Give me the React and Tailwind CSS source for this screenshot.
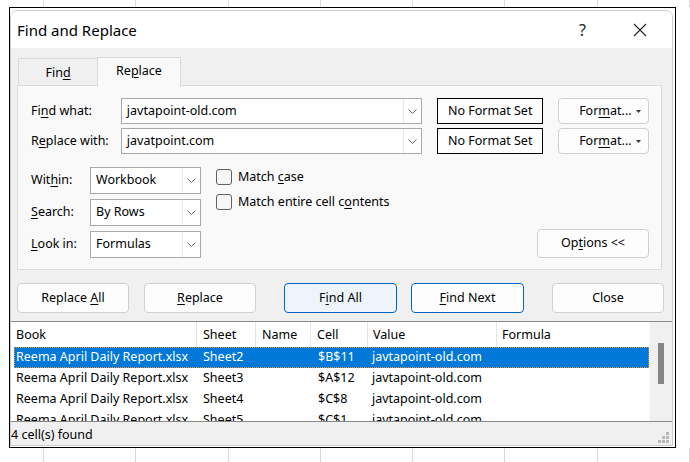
import React from "react";

const U = ({ children }) => (
  <span className="underline underline-offset-[2px] decoration-[1px]">{children}</span>
);

const Chevron = () => (
  <svg width="9" height="5" viewBox="0 0 9 5">
    <path d="M0.5 0.5 L4.5 4.5 L8.5 0.5" fill="none" stroke="#6a6a6a" strokeWidth="1" />
  </svg>
);

const Combo = ({ w, h, children }) => (
  <div className={`${w} ${h} flex border border-[#a9a9a9] bg-white`}>
    <div className="flex-1 flex items-center pl-[5px] text-black">{children}</div>
    <div className="w-[18px] flex items-center justify-center border-l border-[#e6e6e6]">
      <Chevron />
    </div>
  </div>
);

const GridStrip = ({ h }) => (
  <div className={`${h} flex`}>
    <div className="w-[46px] border-r border-[#d9d9d9]" />
    {[0, 1, 2, 3, 4, 5, 6].map((i) => (
      <div key={i} className="w-[96px] border-r border-[#d9d9d9]" />
    ))}
  </div>
);

const Btn = ({ w, children, variant }) => {
  const cls =
    variant === "primary"
      ? "border-[#0067c0] bg-[#eef4fb]"
      : variant === "blue"
      ? "border-[#0067c0] bg-[#fdfdfd]"
      : "border-[#d0d0d0] bg-[#fdfdfd]";
  return (
    <div className={`${w} h-[30px] rounded-[4px] border ${cls} flex items-center justify-center text-black`}>
      <span>{children}</span>
    </div>
  );
};

const rows = [
  ["Reema April Daily Report.xlsx", "Sheet2", "$B$11", "javtapoint-old.com"],
  ["Reema April Daily Report.xlsx", "Sheet3", "$A$12", "javtapoint-old.com"],
  ["Reema April Daily Report.xlsx", "Sheet4", "$C$8", "javtapoint-old.com"],
  ["Reema April Daily Report.xlsx", "Sheet5", "$C$1", "javtapoint-old.com"],
];

const FormatBtn = () => (
  <div className="ml-[15px] w-[91px] h-[26px] rounded-[4px] border border-[#d0d0d0] bg-[#fdfdfd] flex items-center pl-[20px]">
    <span>
      For<U>m</U>at...
    </span>
    <svg width="5" height="3" viewBox="0 0 5 3" className="ml-auto mr-[7px]">
      <path d="M0 0 L5 0 L2.5 3 Z" fill="#333" />
    </svg>
  </div>
);

export default function App() {
  return (
    <div className="w-[690px] h-[462px] bg-white overflow-hidden font-['Noto_Sans',sans-serif] text-[12.5px] text-black leading-none">
      <GridStrip h="h-[7px]" />
      <div className="ml-[9px] w-[667px] h-[441px] border border-black bg-white pt-[2px] pr-[2px] pb-[1px] flex flex-col">
        <div className="flex-1 flex flex-col rounded-t-[7px] border border-[#cccccc] overflow-hidden">
          {/* Title bar */}
          <div className="h-[37px] bg-white flex items-center shrink-0">
            <div className="pl-[6px] text-[15px] pt-[1px]">Find and Replace</div>
            <div className="ml-auto flex items-center">
              <div className="text-[16px] mr-[47px] pt-[1px] text-[#222]">?</div>
              <svg width="14" height="14" viewBox="0 0 14 14" className="mr-[25px]">
                <path d="M1 1 L13 13 M13 1 L1 13" stroke="#222" strokeWidth="1.1" />
              </svg>
            </div>
          </div>

          {/* Body */}
          <div className="flex-1 bg-[#f0f0f0] flex flex-col">
            {/* Tabs */}
            <div className="mt-[9px] ml-[7px] flex items-end h-[28px]">
              <div className="w-[79px] h-[27px] border-t border-l border-[#dadada] bg-[#f0f0f0] flex items-center justify-center pt-[2px]">
                <span>
                  Fin<U>d</U>
                </span>
              </div>
              <div className="w-[84px] h-[29px] border border-b-0 border-[#dadada] bg-[#f9f9f9] flex items-center justify-center -mb-px relative z-10 pb-[2px]">
                <span>
                  Re<U>p</U>lace
                </span>
              </div>
            </div>

            {/* Panel */}
            <div className="ml-[6px] w-[645px] h-[185px] border border-[#dcdcdc] bg-[#f9f9f9] pl-[13px] pt-[12px] pr-[12px] flex flex-col">
              <div className="flex items-center h-[26px]">
                <div className="w-[90px]">
                  Fi<U>n</U>d what:
                </div>
                <Combo w="w-[302px]" h="h-[26px]">javtapoint-old.com</Combo>
                <div className="ml-[15px] w-[106px] h-[26px] border border-black bg-white flex items-center justify-center">
                  No Format Set
                </div>
                <FormatBtn />
              </div>
              <div className="flex items-center h-[26px] mt-[4px]">
                <div className="w-[90px]">
                  R<U>e</U>place with:
                </div>
                <Combo w="w-[302px]" h="h-[26px]">javatpoint.com</Combo>
                <div className="ml-[15px] w-[106px] h-[26px] border border-black bg-white flex items-center justify-center">
                  No Format Set
                </div>
                <FormatBtn />
              </div>

              <div className="flex mt-[13px]">
                <div className="flex flex-col gap-[5px]">
                  <div className="flex items-center h-[27px]">
                    <div className="w-[59px]">
                      Wit<U>h</U>in:
                    </div>
                    <Combo w="w-[111px]" h="h-[27px]">Workbook</Combo>
                  </div>
                  <div className="flex items-center h-[27px]">
                    <div className="w-[59px]">
                      <U>S</U>earch:
                    </div>
                    <Combo w="w-[111px]" h="h-[27px]">By Rows</Combo>
                  </div>
                  <div className="flex items-center h-[27px]">
                    <div className="w-[59px]">
                      <U>L</U>ook in:
                    </div>
                    <Combo w="w-[111px]" h="h-[27px]">Formulas</Combo>
                  </div>
                </div>
                <div className="ml-[15px] pt-[2px] flex flex-col gap-[9px]">
                  <div className="flex items-center h-[16px]">
                    <div className="w-[16px] h-[16px] rounded-[3px] border border-[#606060] bg-[#f7f7f7]" />
                    <div className="ml-[6px] pt-[1px]">
                      Match <U>c</U>ase
                    </div>
                  </div>
                  <div className="flex items-center h-[16px]">
                    <div className="w-[16px] h-[16px] rounded-[3px] border border-[#606060] bg-[#f7f7f7]" />
                    <div className="ml-[6px] pt-[1px]">
                      Match entire cell c<U>o</U>ntents
                    </div>
                  </div>
                </div>
                <div className="ml-auto self-end w-[112px] h-[29px] rounded-[4px] border border-[#d0d0d0] bg-[#fdfdfd] flex items-center justify-center">
                  <span>
                    Op<U>t</U>ions &lt;&lt;
                  </span>
                </div>
              </div>
            </div>

            {/* Buttons */}
            <div className="mt-[13px] ml-[6px] flex">
              <Btn w="w-[112px]">
                Replace <U>A</U>ll
              </Btn>
              <div className="ml-[15px]">
                <Btn w="w-[112px]">
                  <U>R</U>eplace
                </Btn>
              </div>
              <div className="ml-[28px]">
                <Btn w="w-[113px]" variant="primary">
                  F<U>i</U>nd All
                </Btn>
              </div>
              <div className="ml-[14px]">
                <Btn w="w-[113px]" variant="blue">
                  <U>F</U>ind Next
                </Btn>
              </div>
              <div className="ml-[28px]">
                <Btn w="w-[112px]">Close</Btn>
              </div>
            </div>

            {/* Results list */}
            <div className="mt-[8px] -ml-px -mr-px h-[101px] border border-[#8a8a8a] bg-white flex">
              <div className="flex-1 overflow-hidden flex flex-col">
                <div className="h-[25px] flex shrink-0">
                  <div className="w-[186px] border-r border-[#e5e5e5] flex items-center pl-[5px] pt-[1px]">Book</div>
                  <div className="w-[59px] border-r border-[#e5e5e5] flex items-center pl-[6px] pt-[1px]">Sheet</div>
                  <div className="w-[55px] border-r border-[#e5e5e5] flex items-center pl-[6px] pt-[1px]">Name</div>
                  <div className="w-[57px] border-r border-[#e5e5e5] flex items-center pl-[6px] pt-[1px]">Cell</div>
                  <div className="w-[129px] border-r border-[#e5e5e5] flex items-center pl-[5px] pt-[1px]">Value</div>
                  <div className="flex-1 flex items-center pl-[5px] pt-[1px]">Formula</div>
                </div>
                <div className="pl-[3px] flex flex-col">
                  {rows.map((r, i) => (
                    <div
                      key={i}
                      className={`h-[21px] shrink-0 flex items-center ${
                        i === 0
                          ? "bg-[#0078d7] text-white border border-dotted border-[#e89040]"
                          : "border border-transparent"
                      }`}
                    >
                      <div className="w-[182px] pl-[1px] whitespace-nowrap">{r[0]}</div>
                      <div className="w-[59px] pl-[6px]">{r[1]}</div>
                      <div className="w-[55px]" />
                      <div className="w-[57px] pl-[7px]">{r[2]}</div>
                      <div className="w-[129px] pl-[4px] whitespace-nowrap">{r[3]}</div>
                      <div className="flex-1" />
                    </div>
                  ))}
                </div>
              </div>
              <div className="w-[23px] bg-[#f0f0f0] border-l border-[#f8f8f8]">
                <div className="ml-[8px] mt-[21px] w-[6px] h-[41px] bg-[#858585]" />
              </div>
            </div>

            {/* Status bar */}
            <div className="flex-1 flex items-center relative">
              <div className="pt-[3px]">4 cell(s) found</div>
              <svg width="12" height="12" viewBox="0 0 12 12" className="absolute right-[2px] bottom-[1px]">
                <rect x="8" y="0" width="3" height="3" fill="#b8b8b8" />
                <rect x="4" y="4" width="3" height="3" fill="#b8b8b8" />
                <rect x="8" y="4" width="3" height="3" fill="#b8b8b8" />
                <rect x="0" y="8" width="3" height="3" fill="#b8b8b8" />
                <rect x="4" y="8" width="3" height="3" fill="#b8b8b8" />
                <rect x="8" y="8" width="3" height="3" fill="#b8b8b8" />
              </svg>
            </div>
          </div>
        </div>
      </div>
      <GridStrip h="h-[14px]" />
    </div>
  );
}
